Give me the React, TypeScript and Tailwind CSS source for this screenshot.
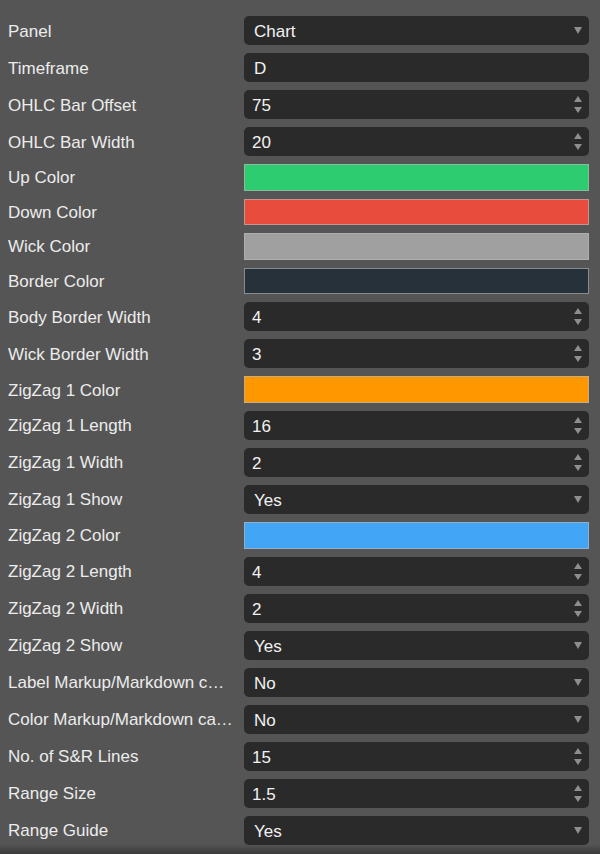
import React from 'react';

type Row =
  | { label: string; kind: 'select' | 'text' | 'number'; value: string }
  | { label: string; kind: 'color'; color: string };

const rows: Row[] = [
  { label: 'Panel', kind: 'select', value: 'Chart' },
  { label: 'Timeframe', kind: 'text', value: 'D' },
  { label: 'OHLC Bar Offset', kind: 'number', value: '75' },
  { label: 'OHLC Bar Width', kind: 'number', value: '20' },
  { label: 'Up Color', kind: 'color', color: '#2ecc71' },
  { label: 'Down Color', kind: 'color', color: '#e74c3c' },
  { label: 'Wick Color', kind: 'color', color: '#a0a0a0' },
  { label: 'Border Color', kind: 'color', color: '#263139' },
  { label: 'Body Border Width', kind: 'number', value: '4' },
  { label: 'Wick Border Width', kind: 'number', value: '3' },
  { label: 'ZigZag 1 Color', kind: 'color', color: '#ff9800' },
  { label: 'ZigZag 1 Length', kind: 'number', value: '16' },
  { label: 'ZigZag 1 Width', kind: 'number', value: '2' },
  { label: 'ZigZag 1 Show', kind: 'select', value: 'Yes' },
  { label: 'ZigZag 2 Color', kind: 'color', color: '#42a5f5' },
  { label: 'ZigZag 2 Length', kind: 'number', value: '4' },
  { label: 'ZigZag 2 Width', kind: 'number', value: '2' },
  { label: 'ZigZag 2 Show', kind: 'select', value: 'Yes' },
  { label: 'Label Markup/Markdown c…', kind: 'select', value: 'No' },
  { label: 'Color Markup/Markdown ca…', kind: 'select', value: 'No' },
  { label: 'No. of S&R Lines', kind: 'number', value: '15' },
  { label: 'Range Size', kind: 'number', value: '1.5' },
  { label: 'Range Guide', kind: 'select', value: 'Yes' },
];

const SelectArrow = () => (
  <svg width="8" height="7" viewBox="0 0 8 7" className="shrink-0">
    <path d="M0 0 H8 L4 7 Z" fill="#8e8e8e" />
  </svg>
);

const Spinner = () => (
  <svg width="8" height="17" viewBox="0 0 8 17" className="shrink-0">
    <path d="M4 0 L8 6 H0 Z" fill="#8e8e8e" />
    <path d="M0 11 H8 L4 17 Z" fill="#8e8e8e" />
  </svg>
);

const Control: React.FC<{ row: Row }> = ({ row }) => {
  if (row.kind === 'color') {
    return (
      <div
        className="h-[26.6px] w-[345px] border border-[#b4b4b4]/70"
        style={{ backgroundColor: row.color }}
      />
    );
  }
  return (
    <div className="h-[29px] w-[345px] rounded-[5px] bg-[#2a2a2a] flex items-center justify-between pr-[7px]">
      <span className={`${row.kind === 'number' ? 'pl-[8px]' : 'pl-[10px]'} pt-[2px] text-[17px] text-[#f2f2f2] leading-none`}>
        {row.value}
      </span>
      {row.kind === 'select' && <SelectArrow />}
      {row.kind === 'number' && <Spinner />}
    </div>
  );
};

export default function App() {
  return (
    <div
      className="relative h-[854px] w-[600px] overflow-hidden bg-[#555555] pt-[16px] pl-[8px]"
      style={{ fontFamily: '"Liberation Sans", Arial, sans-serif' }}
    >
      <div className="flex flex-col gap-[8px]">
        {rows.map((row) => (
          <div key={row.label} className="flex items-center gap-[8px]">
            <div className="w-[228px] shrink-0 whitespace-nowrap text-[17px] text-[#ececec] leading-none pt-[1px]">
              {row.label}
            </div>
            <Control row={row} />
          </div>
        ))}
      </div>
      <div className="absolute bottom-0 left-0 right-0 h-[10px] bg-gradient-to-b from-[#555555]/0 to-[#3a3a3a]" />
    </div>
  );
}
